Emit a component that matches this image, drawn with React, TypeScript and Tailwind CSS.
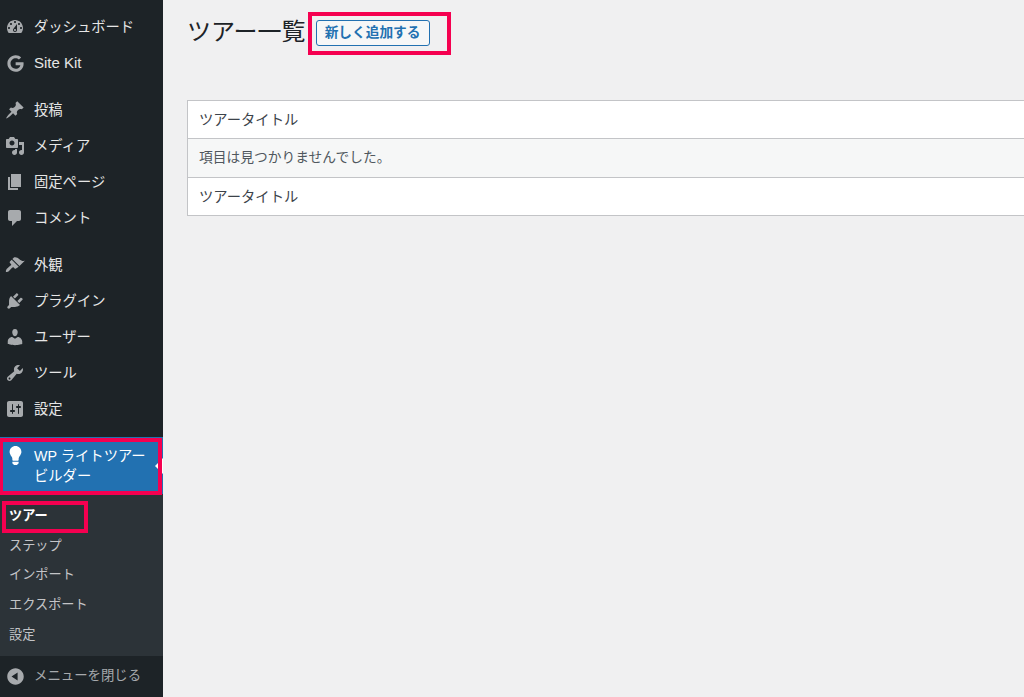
import React from 'react';
import { FaGoogle } from 'react-icons/fa';

const font = 'font-["Liberation_Sans","Noto_Sans_CJK_JP",sans-serif]';

const icons: Record<string, string> = {
  dashboard:
    'M3.76 16h12.48c1.1-1.37 1.76-3.11 1.76-5 0-4.42-3.58-8-8-8s-8 3.58-8 8c0 1.89.66 3.63 1.76 5zM10 4c.55 0 1 .45 1 1s-.45 1-1 1-1-.45-1-1 .45-1 1-1zM6 6c.55 0 1 .45 1 1s-.45 1-1 1-1-.45-1-1 .45-1 1-1zm8 0c.55 0 1 .45 1 1s-.45 1-1 1-1-.45-1-1 .45-1 1-1zm-5.37 5.55L12 7v6c0 1.1-.9 2-2 2s-2-.9-2-2c0-.57.24-1.08.63-1.45zM4 10c.55 0 1 .45 1 1s-.45 1-1 1-1-.45-1-1 .45-1 1-1zm12 0c.55 0 1 .45 1 1s-.45 1-1 1-1-.45-1-1 .45-1 1-1zm-5 3c0-.55-.45-1-1-1s-1 .45-1 1 .45 1 1 1 1-.45 1-1z',
  pin: 'M10.44 3.02l1.82-1.82 6.36 6.35-1.83 1.82c-1.05-.68-2.48-.57-3.41.36l-.75.75c-.92.93-1.04 2.35-.35 3.41l-1.83 1.82-2.41-2.41-2.8 2.79c-.42.42-3.38 2.71-3.8 2.29s1.86-3.39 2.28-3.81l2.79-2.79L4.1 9.36l1.83-1.82c1.05.69 2.48.57 3.4-.36l.75-.75c.93-.92 1.05-2.35.36-3.41z',
  media:
    'M13 11V4c0-.55-.45-1-1-1h-1.67L9 1H5L3.67 3H2c-.55 0-1 .45-1 1v7c0 .55.45 1 1 1h10c.55 0 1-.45 1-1zM7 4.5c1.38 0 2.5 1.12 2.5 2.5S8.38 9.5 7 9.5 4.5 8.38 4.5 7 5.62 4.5 7 4.5zM14 6h5v10.5c0 1.38-1.12 2.5-2.5 2.5S14 17.88 14 16.5s1.12-2.5 2.5-2.5c.17 0 .34.02.5.05V9h-3V6zm-4 8.05V13h2v3.5c0 1.38-1.12 2.5-2.5 2.5S7 17.88 7 16.5 8.12 14 9.5 14c.17 0 .34.02.5.05z',
  page: 'M6 15V2h10v13H6zm-1 1h8v2H3V5h2v11z',
  comments: 'M5 2h9c1.1 0 2 .9 2 2v7c0 1.1-.9 2-2 2h-2l-5 5v-5H5c-1.1 0-2-.9-2-2V4c0-1.1.9-2 2-2z',
  appearance:
    'M14.48 11.06L7.41 3.99l1.5-1.5c.5-.56 2.3-.47 3.51.32 1.21.8 1.43 1.28 2.91 2.1 1.18.64 2.45 1.26 4.45.85zm-.71.71L6.7 4.7 4.93 6.47c-.39.39-.39 1.02 0 1.41l1.06 1.06c.39.39.39 1.03 0 1.42-.6.6-1.43 1.11-2.21 1.69-.35.26-.7.53-1.01.84C1.43 13.71.37 15.75 1 17c.6.36 2.3-.4 3-1.1l3.03-3.03c.6-.6 1.09-.96 1.69-.36l.9.9c.39.39 1.02.39 1.41 0z',
  plugins:
    'M13.11 4.36L9.87 7.6 8 5.73l3.24-3.24c.35-.34 1.05-.2 1.56.32.52.51.66 1.21.31 1.55zm-8 1.77l.91-1.12 9.01 9.01-1.19.84c-.71.71-2.63 1.16-3.82 1.16H6.14L4.9 17.26c-.59.59-1.54.59-2.12 0-.59-.58-.59-1.53 0-2.12l1.24-1.24v-3.88c0-1.13.4-3.19 1.09-3.89zm7.26 3.97l3.24-3.24c.34-.35 1.04-.21 1.55.31.52.51.66 1.21.31 1.55l-3.24 3.25z',
  users:
    'M10 9.25c-2.27 0-2.73-3.44-2.73-3.44C7 4.02 7.82 2 9.97 2c2.16 0 2.98 2.02 2.71 3.81 0 0-.41 3.44-2.68 3.44zm0 2.57L12.72 10c2.39 0 4.52 2.33 4.52 4.53v2.49s-3.65 1.13-7.24 1.13c-3.65 0-7.24-1.13-7.24-1.13v-2.49c0-2.25 1.94-4.48 4.47-4.48z',
  tools:
    'M16.68 9.77c-1.34 1.34-3.3 1.67-4.95.99l-5.41 6.52c-.99.99-2.59.99-3.58 0s-.99-2.59 0-3.57l6.52-5.42c-.68-1.65-.35-3.61.99-4.95 1.28-1.28 3.12-1.62 4.72-1.06l-2.89 2.89 2.82 2.82 2.86-2.87c.53 1.58.18 3.39-1.08 4.65zM3.81 16.21c.4.39 1.04.39 1.43 0 .4-.4.4-1.04 0-1.43-.39-.4-1.03-.4-1.43 0-.39.39-.39 1.03 0 1.43z',
  settings:
    'M18 16V4c0-1.1-.9-2-2-2H4c-1.1 0-2 .9-2 2v12c0 1.1.9 2 2 2h12c1.1 0 2-.9 2-2zM8 11h1c.55 0 1 .45 1 1s-.45 1-1 1H8v1.5c0 .28-.22.5-.5.5s-.5-.22-.5-.5V13H6c-.55 0-1-.45-1-1s.45-1 1-1h1V5.5c0-.28.22-.5.5-.5s.5.22.5.5V11zm5-2h-1c-.55 0-1-.45-1-1s.45-1 1-1h1V5.5c0-.28.22-.5.5-.5s.5.22.5.5V7h1c.55 0 1 .45 1 1s-.45 1-1 1h-1v5.5c0 .28-.22.5-.5.5s-.5-.22-.5-.5V9z',
  lightbulb:
    'M10 1c3.11 0 5.63 2.52 5.63 5.62 0 1.84-2.03 4.58-2.03 4.58-.33.44-.6 1.25-.6 1.8v1c0 .55-.45 1-1 1H8c-.55 0-1-.45-1-1v-1c0-.55-.27-1.36-.6-1.8 0 0-2.02-2.74-2.02-4.58C4.38 3.52 6.89 1 10 1zM7 16.87V16h6v.87c0 .62-.13 1.13-.75 1.13H12c0 .62-.4 1-1.02 1h-2c-.61 0-.98-.38-.98-1h-.25c-.62 0-.75-.51-.75-1.13z',
  collapse: 'M10 2.16c4.33 0 7.84 3.51 7.84 7.84s-3.51 7.84-7.84 7.84S2.16 14.33 2.16 10 5.71 2.16 10 2.16zm2 11.72V6.12L6.18 9.97z',
};

function Dashicon({ name, className }: { name: string; className: string }) {
  return (
    <svg viewBox="0 0 20 20" className={className} fill="currentColor">
      <path d={icons[name]} />
    </svg>
  );
}

function MenuItem({ icon, label }: { icon: string; label: string }) {
  return (
    <div className={icon === 'google' ? 'flex h-9 items-center text-[15px] text-[#e6e6e6]' : 'flex h-9 items-center text-[14.3px] text-[#e6e6e6]'}>
      <div className="flex w-[34px] shrink-0 justify-center pr-1 text-[#a7aaad]">
        {icon === 'google' ? <FaGoogle className="h-[17px] w-[17px]" /> : <Dashicon name={icon} className="h-[20px] w-[20px]" />}
      </div>
      <span className={icon === 'google' ? '' : 'pt-[2px]'}>{label}</span>
    </div>
  );
}

const groupOne = [
  { icon: 'dashboard', label: 'ダッシュボード' },
  { icon: 'google', label: 'Site Kit' },
];
const groupTwo = [
  { icon: 'pin', label: '投稿' },
  { icon: 'media', label: 'メディア' },
  { icon: 'page', label: '固定ページ' },
  { icon: 'comments', label: 'コメント' },
];
const groupThree = [
  { icon: 'appearance', label: '外観' },
  { icon: 'plugins', label: 'プラグイン' },
  { icon: 'users', label: 'ユーザー' },
  { icon: 'tools', label: 'ツール' },
  { icon: 'settings', label: '設定' },
];
const subItems = ['ステップ', 'インポート', 'エクスポート', '設定'];

function Sidebar() {
  return (
    <aside className="relative flex h-full w-[163px] shrink-0 flex-col overflow-hidden bg-[#1d2327] pt-[9px]">
      <div>{groupOne.map((i) => <MenuItem key={i.label} {...i} />)}</div>
      <div className="mt-[11px]">{groupTwo.map((i) => <MenuItem key={i.label} {...i} />)}</div>
      <div className="mt-[11px]">{groupThree.map((i) => <MenuItem key={i.label} {...i} />)}</div>

      <div className="relative mt-[10px] flex h-[57px] items-center bg-[#2271b1] text-[14.3px] leading-[20px] text-white">
        <div className="flex w-[34px] shrink-0 justify-center self-start pt-[8px] pr-1">
          <Dashicon name="lightbulb" className="h-[21px] w-[21px]" />
        </div>
        <span className="w-[120px]">WP ライトツアービルダー</span>
        <div className="absolute top-[21px] right-0 h-0 w-0 border-y-[8px] border-r-[8px] border-y-transparent border-r-white" />
      </div>

      <div className="flex h-[162px] flex-col bg-[#2c3338] pt-[7px] pl-[9px] text-[13.2px] leading-[29.7px] text-[#c3c4c7]">
        <div className="font-bold text-white">ツアー</div>
        {subItems.map((s) => (
          <div key={s}>{s}</div>
        ))}
      </div>

      <div className="flex h-[41px] items-center text-[13.4px] text-[#a7aaad]">
        <div className="flex w-[34px] shrink-0 justify-center pr-1">
          <Dashicon name="collapse" className="h-[21px] w-[21px]" />
        </div>
        <span>メニューを閉じる</span>
      </div>

      <div className="absolute top-[438px] left-0 h-[57px] w-[162px] border-4 border-l-[3px] border-[#f50050]" />
      <div className="absolute top-[501px] left-[2px] h-[32px] w-[86px] border-4 border-[#f50050]" />
    </aside>
  );
}

export default function App() {
  return (
    <div className={`flex h-[697px] w-full overflow-hidden bg-[#f0f0f1] ${font}`}>
      <Sidebar />
      <main className="min-w-0 flex-1 pl-[24px]">
        <div className="relative flex h-[100px] items-start pt-[17px]">
          <h1 className="text-[24px] leading-[30px] text-[#1d2327]">ツアー一覧</h1>
          <button className="mt-[3px] ml-[10px] flex h-[26px] w-[114px] items-center justify-center rounded-[3px] border border-[#2271b1] bg-[#f6f7f7] pt-px text-[13.7px] font-bold text-[#2271b1]">
            新しく追加する
          </button>
          <div className="absolute top-[12px] left-[121px] h-[43px] w-[143px] border-4 border-[#f50050]" />
        </div>
        <div className="w-[900px] border border-[#c3c4c7] bg-white">
          <div className="flex h-[38px] items-center border-b border-[#c3c4c7] px-[11px] pt-[2px] text-[14.3px] text-[#3c434a]">
            ツアータイトル
          </div>
          <div className="flex h-[39px] items-center border-b border-[#c3c4c7] bg-[#f6f7f7] px-[11px] text-[13.75px] text-[#50575e]">
            項目は見つかりませんでした。
          </div>
          <div className="flex h-[37px] items-center px-[11px] pt-[3px] text-[14.3px] text-[#3c434a]">
            ツアータイトル
          </div>
        </div>
      </main>
    </div>
  );
}
